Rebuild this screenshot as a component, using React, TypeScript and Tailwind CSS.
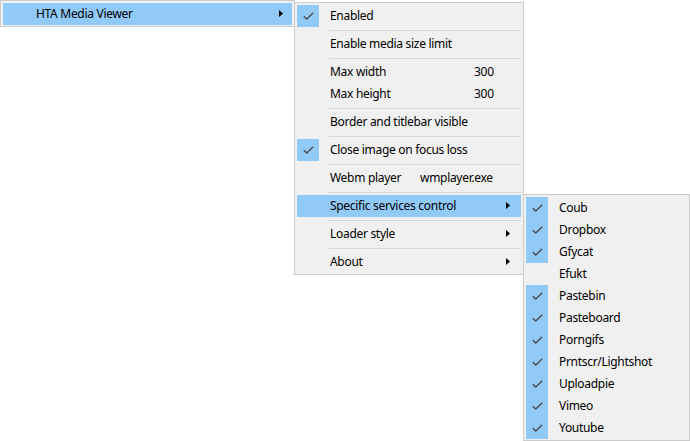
import React from "react";

const Check = () => (
  <svg width="11" height="8" viewBox="0 0 11 8" className="block">
    <path d="M0.8 4.2 L3.8 7 L10.2 0.8" fill="none" stroke="#4a4a4a" strokeWidth="1.3" />
  </svg>
);

const Arrow = () => (
  <svg width="4" height="7" viewBox="0 0 4 7" className="block">
    <polygon points="0,0 4,3.5 0,7" fill="#000" />
  </svg>
);

type Item =
  | { kind: "sep" }
  | { kind: "item"; label: string; checked?: boolean; sub?: boolean; value?: string; valueX?: number; hi?: boolean };

const menu2: Item[] = [
  { kind: "item", label: "Enabled", checked: true },
  { kind: "sep" },
  { kind: "item", label: "Enable media size limit" },
  { kind: "sep" },
  { kind: "item", label: "Max width", value: "300", valueX: 144 },
  { kind: "item", label: "Max height", value: "300", valueX: 144 },
  { kind: "sep" },
  { kind: "item", label: "Border and titlebar visible" },
  { kind: "sep" },
  { kind: "item", label: "Close image on focus loss", checked: true },
  { kind: "sep" },
  { kind: "item", label: "Webm player", value: "wmplayer.exe", valueX: 90 },
  { kind: "sep" },
  { kind: "item", label: "Specific services control", sub: true, hi: true },
  { kind: "sep" },
  { kind: "item", label: "Loader style", sub: true },
  { kind: "sep" },
  { kind: "item", label: "About", sub: true },
];

const services: [string, boolean][] = [
  ["Coub", true],
  ["Dropbox", true],
  ["Gfycat", true],
  ["Efukt", false],
  ["Pastebin", true],
  ["Pasteboard", true],
  ["Porngifs", true],
  ["Prntscr/Lightshot", true],
  ["Uploadpie", true],
  ["Vimeo", true],
  ["Youtube", true],
];

function Row({ it, textLeft }: { it: Extract<Item, { kind: "item" }>; textLeft: number }) {
  return (
    <div className={`relative flex h-[22px] items-center ${it.hi ? "bg-[#91c9f7]" : ""}`}>
      <div className={`flex h-[22px] w-[22px] items-center justify-center ${it.checked ? "bg-[#91c9f7]" : ""}`}>
        {it.checked ? <Check /> : null}
      </div>
      <div className="flex flex-1 items-center" style={{ paddingLeft: textLeft }}>
        <span className="whitespace-nowrap">{it.label}</span>
        {it.value ? (
          <span className="absolute whitespace-nowrap" style={{ left: 33 + (it.valueX ?? 0) }}>
            {it.value}
          </span>
        ) : null}
      </div>
      {it.sub ? (
        <div className="absolute right-[11px] top-[7px]">
          <Arrow />
        </div>
      ) : null}
    </div>
  );
}

export default function App() {
  return (
    <div
      className="relative h-[441px] w-[690px] overflow-hidden bg-white text-[12px] tracking-[-0.3px] text-black"
      style={{ fontFamily: '"Segoe UI", "Noto Sans", sans-serif' }}
    >
      {/* Menu 1 */}
      <div className="absolute left-0 top-0 w-[295px] border border-[#cccccc] bg-[#f0f0f0] px-[2px] pb-[1px] pt-[2px]">
        <div className="relative flex h-[22px] items-center bg-[#91c9f7] pl-[33px]">
          <span>HTA Media Viewer</span>
          <div className="absolute right-[9px] top-[7px]">
            <Arrow />
          </div>
        </div>
      </div>

      {/* Menu 2 */}
      <div className="absolute left-[294px] top-[2px] w-[230px] border border-[#cccccc] bg-[#f0f0f0] px-[2px] pb-[1px] pt-[2px]">
        {menu2.map((it, i) =>
          it.kind === "sep" ? (
            <div key={i} className="flex h-[6px] items-center pl-[32px]">
              <div className="h-px w-full bg-[#d7d7d7]" />
            </div>
          ) : (
            <Row key={i} it={it} textLeft={11} />
          )
        )}
      </div>

      {/* Menu 3 */}
      <div className="absolute left-[523px] top-[194px] w-[167px] border border-[#cccccc] bg-[#f0f0f0] px-[2px] pb-[1px] pt-[2px]">
        {services.map(([name, c]) => (
          <Row key={name} it={{ kind: "item", label: name, checked: c }} textLeft={11} />
        ))}
      </div>
    </div>
  );
}
